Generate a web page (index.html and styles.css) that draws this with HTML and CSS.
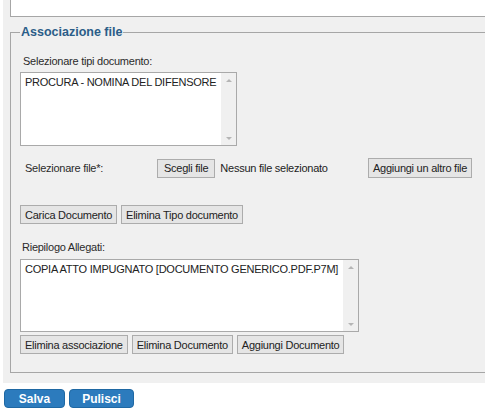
FILE: index.html
```html
<!DOCTYPE html>
<html lang="it">
<head>
  <meta charset="UTF-8" />
  <title>Associazione file</title>
  <link rel="stylesheet" href="styles.css">
</head>
<body>
  <div class="panel">
    <div class="prev-section"></div>

    <fieldset class="group">
      <legend>Associazione file</legend>

      <p class="label first">Selezionare tipi documento:</p>
      <div class="listbox types">
        <div class="list-items">
          <div class="item">PROCURA - NOMINA DEL DIFENSORE</div>
        </div>
        <div class="scroll"><span class="arrow up"></span><span class="arrow down"></span></div>
      </div>

      <div class="file-row">
        <span class="label">Selezionare file*:</span>
        <span class="file-pick">
          <button class="btn pick">Scegli file</button>
          <span class="file-name">Nessun file selezionato</span>
        </span>
        <button class="btn">Aggiungi un altro file</button>
      </div>

      <div class="btn-row upload">
        <button class="btn">Carica Documento</button>
        <button class="btn">Elimina Tipo documento</button>
      </div>

      <p class="label summary">Riepilogo Allegati:</p>
      <div class="listbox attached">
        <div class="list-items">
          <div class="item">COPIA ATTO IMPUGNATO [DOCUMENTO GENERICO.PDF.P7M]</div>
        </div>
        <div class="scroll"><span class="arrow up"></span><span class="arrow down"></span></div>
      </div>

      <div class="btn-row actions">
        <button class="btn">Elimina associazione</button>
        <button class="btn">Elimina Documento</button>
        <button class="btn">Aggiungi Documento</button>
      </div>
    </fieldset>
  </div>

  <div class="form-actions">
    <button class="btn-main salva">Salva</button>
    <button class="btn-main pulisci">Pulisci</button>
  </div>
</body>
</html>
```

FILE: styles.css
```css
* {
  margin: 0;
  padding: 0;
  box-sizing: border-box;
}
body {
  font-family: "Liberation Sans", Arial, sans-serif;
  font-size: 11px;
  letter-spacing: -0.25px;
  color: #333;
  background: #fff;
}

/* PANEL */
.panel {
  margin: 0 10px 0 3px;
  height: 383px;
  background: #f0f0f0;
  overflow: hidden;
}
.prev-section {
  margin-left: 7px;
  width: 500px;
  height: 17px;
  background: #fff;
  border-left: 1px solid #a6a6a6;
  border-bottom: 1px solid #a6a6a6;
}

/* FIELDSET */
.group {
  margin: 8px 0 0 7px;
  width: 500px;
  height: 348px;
  border: 1px solid #a6a6a6;
  padding: 0 0 0 9px;
}
.group legend {
  padding: 0 1px;
  font-weight: bold;
  font-size: 12.5px;
  letter-spacing: 0;
  color: #2b5d88;
}

.label { color: #2b2b2b; }
.label.first { margin: 16px 0 0 3px; }
.label.summary { margin: 17px 0 0 2px; }

/* LISTBOX */
.listbox {
  display: flex;
  background: #fff;
  border: 1px solid #a9a9a9;
}
.listbox.types { width: 217px; height: 74px; margin-top: 5px; }
.listbox.attached { width: 339px; height: 73px; margin-top: 6px; }
.list-items {
  flex: 1;
  padding: 3px 4px;
  color: #222;
  white-space: nowrap;
}
.scroll {
  width: 16px;
  background: #f0f0f0;
  border-left: 1px solid #fff;
  display: flex;
  flex-direction: column;
  justify-content: space-between;
  align-items: center;
  padding: 6px 0 5px;
}
.arrow {
  width: 0;
  height: 0;
  border-left: 3px solid transparent;
  border-right: 3px solid transparent;
}
.arrow.up { border-bottom: 3px solid #b5b5b5; }
.arrow.down { border-top: 3px solid #b5b5b5; }

/* FILE ROW */
.file-row {
  display: grid;
  grid-template-columns: 132px 211px auto;
  align-items: center;
  margin: 12px 0 0 5px;
}
.file-pick {
  display: flex;
  align-items: center;
  gap: 5px;
}
.file-name { color: #222; }

/* BUTTONS */
.btn {
  font-family: inherit;
  font-size: 11px;
  letter-spacing: -0.25px;
  color: #222;
  height: 19px;
  padding: 0 4px;
  background: #e5e5e5;
  border: 1px solid #acacac;
  cursor: pointer;
  white-space: nowrap;
}
.btn.pick { padding: 0 6px; }
.file-row .btn { justify-self: start; }
.file-row > .btn { height: 20px; }
.btn-row {
  display: flex;
  gap: 4px;
}
.btn-row.upload { margin-top: 27px; }
.btn-row.actions { margin-top: 3px; }

/* FORM ACTIONS */
.form-actions {
  display: flex;
  gap: 4px;
  margin: 6px 0 0 4px;
}
.btn-main {
  height: 19px;
  border: 1px solid #1f68a3;
  border-radius: 4px;
  background: #2c7bbd;
  color: #fff;
  font-family: inherit;
  font-weight: bold;
  font-size: 12px;
  letter-spacing: 0;
  cursor: pointer;
}
.btn-main.salva { width: 61px; }
.btn-main.pulisci { width: 65px; }
```
